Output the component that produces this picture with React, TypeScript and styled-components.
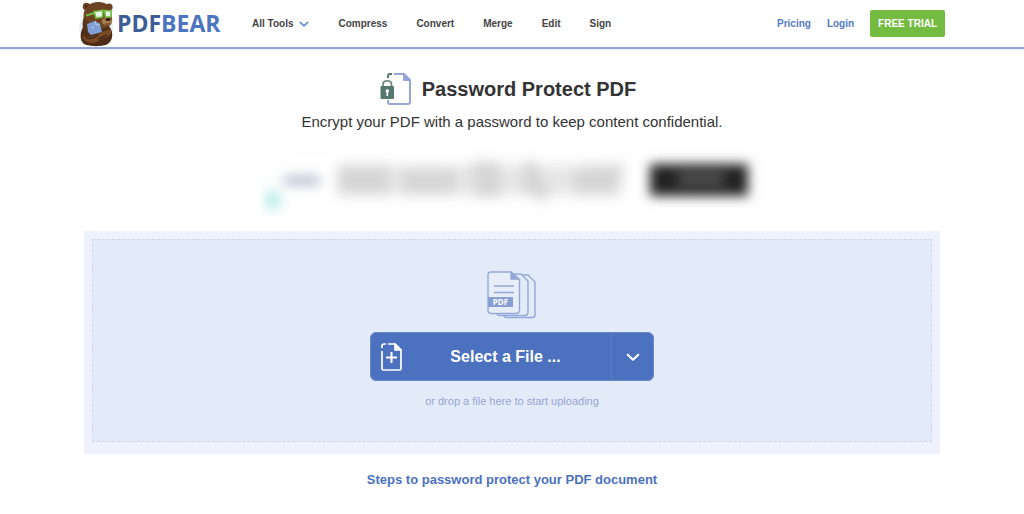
import React from 'react';
import styled, { createGlobalStyle } from 'styled-components';

const GlobalStyle = createGlobalStyle`
  *, *::before, *::after { box-sizing: border-box; }
  body {
    margin: 0;
    background: #fff;
    color: #333;
    font-family: "Liberation Sans", Arial, sans-serif;
  }
  a { text-decoration: none; }
  button { font: inherit; cursor: pointer; }
`;

const Header = styled.header`
  border-bottom: 2px solid #8fa8d9;
  box-shadow: 0 1px 1px #e9eef8;
`;

const HeaderInner = styled.div`
  display: flex;
  align-items: center;
  max-width: 866px;
  height: 47px;
  margin: 0 auto;
`;

const Brand = styled.a`
  display: flex;
  align-items: center;
  width: 173px;
  flex: none;
  color: #4c74c1;
  font: bold 23px/47px "Open Sans", sans-serif;
`;

const BrandDark = styled.span`
  margin-left: 2px;
  color: #3c5d97;
`;

const Nav = styled.nav`
  display: flex;
  flex: 1;
  gap: 29px;
`;

const HeaderLink = styled.a<{ $accent?: boolean }>`
  font-size: 10px;
  line-height: 16px;
  font-weight: bold;
  white-space: nowrap;
  color: ${({ $accent }) => ($accent ? '#5479c6' : '#444')};
`;

const MenuButton = styled.button`
  display: flex;
  align-items: center;
  gap: 6px;
  padding: 0;
  border: 0;
  background: none;
  color: #444;
  font-size: 10px;
  line-height: 16px;
  font-weight: bold;
`;

const Account = styled.div`
  display: flex;
  align-items: center;
  gap: 16px;
`;

const TrialButton = styled.button`
  height: 27px;
  padding: 0 8px;
  border: 0;
  border-radius: 2px;
  background: #74bc41;
  color: #fff;
  font-size: 10px;
  font-weight: bold;
  white-space: nowrap;
`;

const Main = styled.main`
  display: flex;
  flex-direction: column;
  align-items: center;
  max-width: 856px;
  margin: 0 auto;
  padding: 22px 0 24px;
`;

const TitleRow = styled.div`
  display: flex;
  align-items: center;
  gap: 10px;
  height: 36px;
  padding-right: 8px;
`;

const Title = styled.h1`
  margin: 0;
  font-size: 20px;
  line-height: 24px;
`;

const Subtitle = styled.p`
  margin: 5px 0 0;
  font-size: 15px;
  line-height: 20px;
`;

const Promo = styled.aside`
  display: flex;
  align-items: center;
  width: 504px;
  max-width: 100%;
  height: 68px;
  margin: 16px 0 15px;
  background: #fefefe;
`;

const UploadPanel = styled.section`
  width: 100%;
  padding: 8px 8px 12px;
  background: #edf2fe;
`;

const DropZone = styled.div`
  display: flex;
  flex-direction: column;
  align-items: center;
  padding: 31px 0 32px;
  border: 1px dashed #cbd7ef;
  background: #e4ebf8;
`;

const Picker = styled.div`
  display: flex;
  width: 284px;
  height: 49px;
  margin: 13px 0 12px;
  overflow: hidden;
  border: 1px solid #6687ca;
  border-radius: 6px;
  background: #4c71bf;
`;

const SelectButton = styled.button`
  display: flex;
  flex: 1;
  align-items: center;
  padding: 0 10px;
  border: 0;
  background: none;
  color: #fff;
  font-size: 16px;
  font-weight: bold;
`;

const SelectLabel = styled.span`
  flex: 1;
  padding-left: 8px;
`;

const SourceButton = styled.button`
  display: flex;
  align-items: center;
  justify-content: center;
  width: 42px;
  padding: 0;
  border: 0;
  border-left: 1px solid #597bc4;
  background: none;
  color: #fff;
`;

const Hint = styled.p`
  margin: 0;
  color: #95a5d4;
  font-size: 11px;
  line-height: 16px;
`;

const StepsTitle = styled.h2`
  margin: 16px 0 0;
  color: #4c71bf;
  font-size: 13px;
  line-height: 20px;
`;

const BearLogo = () => (
  <svg width="36" height="46" viewBox="0 0 36 46" aria-hidden="true">
    <circle cx="17" cy="27" r="17" fill="#e8edf8" />
    <path d="M5 24C1 31 0 39 5 43C11 46 26 46 30 42C35 37 34 29 29 24Z" fill="#4f2d18" />
    <circle cx="7.5" cy="5.5" r="3.8" fill="#6b4222" />
    <circle cx="30" cy="6" r="3.6" fill="#6b4222" />
    <circle cx="7.5" cy="5.5" r="1.6" fill="#3f2513" />
    <path d="M6 8C10 2 15 1 20 1C27 1 31 5 32 11L33 18C34 22 31 26 26 27C18 29 9 27 6 22C4 17 4 12 6 8Z" fill="#6d4423" />
    <path d="M5 16C3 22 3 27 6 30L12 31L24 27C15 26 9 22 5 16Z" fill="#55331b" />
    <path d="M23 19C25 16 31 16 33 19C34 23 30 25 26 24Q22 23 23 19Z" fill="#a87b50" />
    <ellipse cx="29" cy="18.5" rx="2.6" ry="1.6" fill="#29170e" />
    <path d="M26 23Q29 24 31 22" fill="none" stroke="#5b371d" />
    <path d="M8 23L16 20L21 23L23 31L12 34L9 31Z" fill="#7f9fd6" />
    <path d="M16 20L17 24L21 23M12 27L15 26" fill="none" stroke="#b9cbea" />
    <path d="M3 34C9 40 17 33 31 28C35 32 29 37 23 37L18 41C11 44 4 40 3 34Z" fill="#794a24" />
    <path d="M7 37Q13 39 19 34M19 38L28 34" fill="none" stroke="#3a2013" strokeWidth="1.2" />
    <path d="M7 14.5L16 12" stroke="#72bd42" strokeWidth="2" />
    <path d="M15 10.5L24 9.5L23.5 16L17 17Z" fill="#e6f5ea" stroke="#72bd42" strokeWidth="1.6" />
    <path d="M25.5 9.5L32.5 10L31.5 16L26.5 16Z" fill="#e6f5ea" stroke="#72bd42" strokeWidth="1.6" />
  </svg>
);

const Chevron = ({ size, weight, color }: { size: number; weight: number; color: string }) => (
  <svg width={size} height={size} viewBox="0 0 12 12" fill="none" stroke={color} strokeWidth={weight} aria-hidden="true">
    <path d="M1.5 4L6 8.3L10.5 4" strokeLinecap="round" strokeLinejoin="round" />
  </svg>
);

const LockedPage = () => (
  <svg width="32" height="34" viewBox="0 0 32 34" fill="none" aria-hidden="true">
    <path d="M14 2H24L30 8V30Q30 32 28 32H10Q8 32 8 30V28" stroke="#94a5d6" strokeWidth="2" />
    <path d="M23 1L31 9H24Q23 9 23 8Z" fill="#94a5d6" />
    <path d="M8 6V4Q8 2 10 2H12" stroke="#55776e" strokeWidth="2" />
    <path d="M3 15V12.5C3 7.5 11.5 7.5 11.5 12.5V15" stroke="#668279" strokeWidth="1.7" />
    <rect x="0.5" y="14" width="13.5" height="13" rx="1" fill="#55776e" />
    <circle cx="7.3" cy="19" r="1.7" fill="#fff" />
    <path d="M7.3 19V24" stroke="#fff" strokeWidth="1.6" />
  </svg>
);

const PdfStack = () => (
  <svg width="50" height="48" viewBox="0 0 50 48" fill="none" stroke="#94a8d8" strokeWidth="1.4" aria-hidden="true">
    <path d="M32 4H41L48 11V44Q48 46.5 45 46.5H20Q17 46.5 17 44" fill="#e4ebf8" />
    <path d="M25 3H34L41 10V41Q41 44.5 38 44.5H14Q10 44.5 10 42" fill="#e4ebf8" />
    <path d="M4 1H24L32.5 9V39Q32.5 42.5 29 42.5H4Q1 42.5 1 39V4Q1 1 4 1Z" fill="#e7edf9" />
    <path d="M24 1V8H32Z" fill="#94a8d8" />
    <path d="M7 15H27M7 21.5H27" />
    <rect x="1" y="26" width="25" height="10" fill="#889fd3" stroke="none" />
    <text x="13.5" y="34" textAnchor="middle" fill="#fff" stroke="none" fontFamily="Open Sans, sans-serif" fontWeight="bold" fontSize="8">PDF</text>
  </svg>
);

const AddPage = () => (
  <svg width="21" height="28" viewBox="0 0 21 28" fill="none" stroke="#fff" strokeWidth="1.7" aria-hidden="true">
    <path d="M7 1H14L20 7V25.5Q20 27 18.5 27H2.5Q1 27 1 25.5V8M1 5V3Q1 1 3 1H5" />
    <path d="M14 1V7H20Z" fill="#fff" />
    <path d="M10.5 9V20M5 14.5H16" strokeWidth="2" />
  </svg>
);

const PromoArt = () => (
  <svg width="100%" height="68" viewBox="0 0 504 68" colorInterpolationFilters="sRGB" aria-hidden="true">
    <defs>
      <filter id="soft" x="-20%" y="-100%" width="140%" height="300%">
        <feGaussianBlur stdDeviation="6" />
      </filter>
    </defs>
    <path d="M30 10H70V50H30Z" fill="#fff" />
    <g filter="url(#soft)">
      <rect x="24" y="28" width="36" height="9" rx="3" fill="#b4bbce" />
      <rect x="6" y="43" width="14" height="18" rx="4" fill="#b9ecec" />
      <path d="M78 17H362V47H78Z" fill="#e6e6e6" />
      <path d="M78 17H128V46H78ZM142 22H195V46H144ZM212 14H240V49H216ZM262 14H276L290 51H278L264 44ZM312 24L332 17H365L354 47H316Z" fill="#d6d6d6" />
    </g>
    <g filter="url(#soft)">
      <rect x="390" y="16" width="98" height="32" fill="#222" />
      <rect x="418" y="25" width="46" height="12" fill="#555" />
    </g>
  </svg>
);

const tools = ['Compress', 'Convert', 'Merge', 'Edit', 'Sign'];

export default function App() {
  return (
    <>
      <GlobalStyle />
      <Header>
        <HeaderInner>
          <Brand href="#">
            <BearLogo />
            <BrandDark>PDF</BrandDark>BEAR
          </Brand>
          <Nav>
            <MenuButton type="button">
              All Tools <Chevron size={10} weight={1.8} color="#5f86d2" />
            </MenuButton>
            {tools.map((tool) => (
              <HeaderLink key={tool} href="#">{tool}</HeaderLink>
            ))}
          </Nav>
          <Account>
            <HeaderLink $accent href="#">Pricing</HeaderLink>
            <HeaderLink $accent href="#">Login</HeaderLink>
            <TrialButton type="button">FREE TRIAL</TrialButton>
          </Account>
        </HeaderInner>
      </Header>
      <Main>
        <TitleRow>
          <LockedPage />
          <Title>Password Protect PDF</Title>
        </TitleRow>
        <Subtitle>Encrypt your PDF with a password to keep content confidential.</Subtitle>
        <Promo aria-label="Advertisement">
          <PromoArt />
        </Promo>
        <UploadPanel>
          <DropZone>
            <PdfStack />
            <Picker>
              <SelectButton type="button">
                <AddPage />
                <SelectLabel>Select a File ...</SelectLabel>
              </SelectButton>
              <SourceButton type="button" aria-label="More file sources">
                <Chevron size={14} weight={1.8} color="#fff" />
              </SourceButton>
            </Picker>
            <Hint>or drop a file here to start uploading</Hint>
          </DropZone>
        </UploadPanel>
        <StepsTitle>Steps to password protect your PDF document</StepsTitle>
      </Main>
    </>
  );
}
